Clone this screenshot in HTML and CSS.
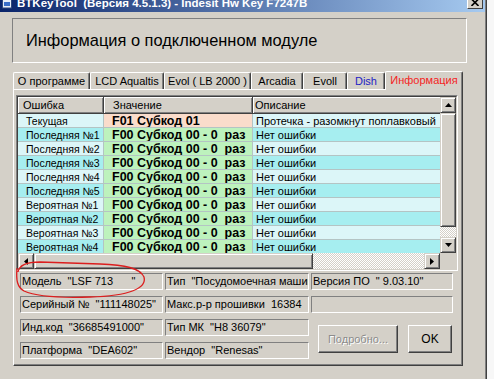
FILE: index.html
```html
<!DOCTYPE html>
<html lang="ru">
<head>
  <meta charset="UTF-8">
  <title>BTKeyTool</title>
  <link rel="stylesheet" href="styles.css">
</head>
<body>
  <div class="window">
    <!-- Title bar (its top is cut off) -->
    <div class="titlebar">
      <svg class="app-icon" width="12" height="10" viewBox="0 0 12 10">
        <rect x="1.5" y="-1" width="9" height="9" fill="#e8eef8" stroke="#30487c"/>
        <rect x="3" y="2" width="6" height="4" fill="#3a6ec8"/>
      </svg>
      <span class="title">BTKeyTool  (Версия 4.5.1.3) - Indesit Hw Key F7247B</span>
      <span class="close">
        <svg width="8" height="7" viewBox="0 0 8 7"><path d="M0.5 0 L7.5 7 M7.5 0 L0.5 7" stroke="#000" stroke-width="1.6"/></svg>
      </span>
    </div>

    <div class="client">
      <div class="caption-panel">Информация о подключенном модуле</div>

      <!-- Tabs -->
      <div class="tabs">
        <span class="tab t-about">О программе</span>
        <span class="tab t-lcd">LCD Aqualtis</span>
        <span class="tab t-evol">Evol ( LB 2000 )</span>
        <span class="tab t-arcadia">Arcadia</span>
        <span class="tab t-evoll">Evoll</span>
        <span class="tab t-dish">Dish</span>
        <span class="tab active">Информация</span>
      </div>

      <div class="page">
        <!-- Error grid -->
        <div class="grid">
          <div class="grid-inner">
            <div class="grid-top">
              <div class="table">
                <div class="head-row">
                  <div class="head h1">Ошибка</div>
                  <div class="head h2">Значение</div>
                  <div class="head h3">Описание</div>
                </div>
                <div class="rows">
                  <div class="err lt">Текущая</div><div class="val cur">F01 Субкод 01</div><div class="desc lt">Протечка - разомкнут поплавковый</div>
                  <div class="err dk">Последняя №1</div><div class="val">F00 Субкод 00 - 0  раз</div><div class="desc dk">Нет ошибки</div>
                  <div class="err lt">Последняя №2</div><div class="val">F00 Субкод 00 - 0  раз</div><div class="desc lt">Нет ошибки</div>
                  <div class="err dk">Последняя №3</div><div class="val">F00 Субкод 00 - 0  раз</div><div class="desc dk">Нет ошибки</div>
                  <div class="err lt">Последняя №4</div><div class="val">F00 Субкод 00 - 0  раз</div><div class="desc lt">Нет ошибки</div>
                  <div class="err dk">Последняя №5</div><div class="val">F00 Субкод 00 - 0  раз</div><div class="desc dk">Нет ошибки</div>
                  <div class="err lt">Вероятная №1</div><div class="val">F00 Субкод 00 - 0  раз</div><div class="desc lt">Нет ошибки</div>
                  <div class="err dk">Вероятная №2</div><div class="val">F00 Субкод 00 - 0  раз</div><div class="desc dk">Нет ошибки</div>
                  <div class="err lt">Вероятная №3</div><div class="val">F00 Субкод 00 - 0  раз</div><div class="desc lt">Нет ошибки</div>
                  <div class="err dk">Вероятная №4</div><div class="val">F00 Субкод 00 - 0  раз</div><div class="desc dk">Нет ошибки</div>
                </div>
              </div>
              <div class="vscroll">
                <div class="sb-btn"><svg width="7" height="4" viewBox="0 0 7 4"><path d="M3.5 0 L7 4 L0 4 Z"/></svg></div>
                <div class="sb-thumb v"></div>
                <div class="sb-track"></div>
                <div class="sb-btn"><svg width="7" height="4" viewBox="0 0 7 4"><path d="M0 0 L7 0 L3.5 4 Z"/></svg></div>
              </div>
            </div>
            <div class="hscroll-row">
              <div class="hscroll">
                <div class="sb-btn"><svg width="4" height="7" viewBox="0 0 4 7"><path d="M0 3.5 L4 0 L4 7 Z"/></svg></div>
                <div class="sb-thumb h"></div>
                <div class="sb-track"></div>
                <div class="sb-btn"><svg width="4" height="7" viewBox="0 0 4 7"><path d="M0 0 L4 3.5 L0 7 Z"/></svg></div>
              </div>
              <div class="corner"></div>
            </div>
          </div>
        </div>

        <!-- Module info fields -->
        <div class="fields">
          <div class="field">Модель  "LSF 713      "</div>
          <div class="field">Тип  "Посудомоечная машина"</div>
          <div class="field">Версия ПО  " 9.03.10"</div>
          <div class="field">Серийный №  "111148025"</div>
          <div class="field">Макс.р-р прошивки  16384</div>
          <div class="field"></div>
          <div class="field">Инд.код  "36685491000"</div>
          <div class="field">Тип МК  "H8 36079"</div>
          <div class="buttons">
            <span class="btn more">Подробно...</span>
            <span class="btn ok">OK</span>
          </div>
          <div class="field">Платформа  "DEA602"</div>
          <div class="field">Вендор  "Renesas"</div>
        </div>
      </div>
    </div>

    <!-- Hand-drawn red mark round the model field -->
    <svg class="mark" width="160" height="50" viewBox="0 0 160 50">
      <path d="M18 17 C19 11, 24 7, 40 7 L100 9 C125 10, 140 13, 144 22 C147 33, 130 41, 90 42 C60 43, 35 41, 24 36 C17 32, 16 25, 17 13" fill="none" stroke="#dc1e1e" stroke-width="1.3"/>
    </svg>
  </div>
</body>
</html>
```

FILE: styles.css
```css
body {
  margin: 0;
  background: #f7f7f7;
  font-family: "Liberation Sans", Arial, sans-serif;
  font-size: 11px;
  color: #000;
  overflow: hidden;
}
.window {
  position: relative;
  width: 485px;
  height: 379px;
  background: #d4d0c8;
  border-right: 1px solid #808080;
  box-shadow: 1px 0 0 #404040;
  overflow: hidden;
}

/* Title bar */
.titlebar {
  height: 12px;
  display: flex;
  align-items: flex-start;
  background: linear-gradient(to right, #0a246a, #a6caf0);
  color: #fff;
  overflow: hidden;
}
.app-icon {
  margin: 0 4px 0 1px;
  flex: none;
}
.title {
  font-weight: bold;
  font-size: 11.5px;
  line-height: 12px;
  margin-top: -3px;
  white-space: pre;
}
.close {
  margin: -5px 2px 0 auto;
  width: 16px;
  height: 14px;
  box-sizing: border-box;
  background: #d4d0c8;
  border: 1px solid;
  border-color: #fff #404040 #404040 #fff;
  display: flex;
  align-items: flex-end;
  justify-content: center;
  padding-bottom: 2px;
}

.client {
  padding: 6px 0 0 12px;
}
.caption-panel {
  width: 455px;
  height: 45px;
  box-sizing: border-box;
  border: 1px solid;
  border-color: #808080 #fff #fff #808080;
  display: flex;
  align-items: center;
  padding-left: 13px;
  font-size: 16.4px;
}

/* Tabs */
.tabs {
  display: flex;
  align-items: flex-end;
  height: 17px;
  margin: 9px 0 0 1px;
}
.tab {
  height: 17px;
  box-sizing: border-box;
  line-height: 16px;
  text-align: center;
  border-left: 1px solid #fff;
  border-top: 1px solid #fff;
  border-right: 1px solid #404040;
  box-shadow: inset -1px 0 #808080;
  border-radius: 2px 2px 0 0;
  white-space: pre;
}
.t-about { width: 77px; }
.t-lcd { width: 74px; }
.t-evol { width: 87px; }
.t-arcadia { width: 52px; }
.t-evoll { width: 44px; }
.t-dish {
  width: 38px;
  color: #1c1cc4;
}
.tab.active {
  width: 78px;
  color: #f42424;
  height: 19px;
  margin-bottom: -1px;
  padding-bottom: 1px;
  line-height: 17px;
  background: #d4d0c8;
  position: relative;
}

.page {
  width: 450px;
  height: 277px;
  box-sizing: border-box;
  margin-left: 1px;
  border: 1px solid;
  border-color: #fff #404040 #404040 #fff;
  box-shadow: inset -1px -1px #808080;
  padding: 5px 0 0 2px;
}

/* Grid */
.grid {
  width: 442px;
  box-sizing: border-box;
  border: 1px solid;
  border-color: #808080 #fff #fff #808080;
}
.grid-inner {
  border: 1px solid;
  border-color: #404040 #d4d0c8 #d4d0c8 #404040;
}
.grid-top {
  display: flex;
}
.table {
  width: 422px;
  height: 156px;
  overflow: hidden;
}
.head-row,
.rows {
  display: grid;
  grid-template-columns: 85px 148px 188px;
  column-gap: 1px;
}
.head-row {
  height: 16px;
  padding-bottom: 1px;
  background: #404040;
}
.head {
  background: #d4d0c8;
  box-shadow: inset 1px 1px #fff, inset -1px -1px #808080;
  line-height: 16px;
  white-space: nowrap;
}
.h1 { padding-left: 5px; }
.h2 { padding-left: 9px; }
.h3 { padding-left: 2px; }
.rows {
  grid-auto-rows: 13px;
  row-gap: 1px;
  background: #b4c4c4;
}
.rows > div {
  padding-top: 2px;
  line-height: 11px;
  white-space: pre;
  overflow: hidden;
  box-sizing: border-box;
}
.err {
  padding-left: 8px;
  font-size: 10.5px;
}
.desc { padding-left: 3px; }
.lt { background: #dcf6f8; }
.dk { background: #a6eef0; }
.val {
  padding-left: 8px;
  font-weight: bold;
  font-size: 12.5px;
  background: #bdf2bd;
}
.val.cur {
  background: #fadccb;
}

/* Scroll bars */
.vscroll {
  width: 16px;
  height: 156px;
  display: flex;
  flex-direction: column;
}
.sb-btn {
  width: 16px;
  height: 16px;
  flex: none;
  box-sizing: border-box;
  background: #d4d0c8;
  border: 1px solid;
  border-color: #d4d0c8 #404040 #404040 #d4d0c8;
  box-shadow: inset 1px 1px #fff, inset -1px -1px #808080;
  display: flex;
  align-items: center;
  justify-content: center;
}
.sb-thumb {
  flex: none;
  box-sizing: border-box;
  background: #d4d0c8;
  border: 1px solid;
  border-color: #d4d0c8 #404040 #404040 #d4d0c8;
  box-shadow: inset 1px 1px #fff, inset -1px -1px #808080;
}
.sb-thumb.v {
  height: 114px;
}
.sb-thumb.h {
  width: 279px;
}
.sb-track {
  flex: 1;
  background: repeating-conic-gradient(#d4d0c8 0 25%, #fff 0 50%) 0 0 / 2px 2px;
}
.hscroll-row {
  display: flex;
  height: 16px;
}
.hscroll {
  width: 422px;
  display: flex;
}
.corner {
  flex: 1;
  background: #d4d0c8;
}

/* Info fields */
.fields {
  display: grid;
  grid-template-columns: 143px 144px 142px;
  grid-template-rows: repeat(4, 17px);
  column-gap: 2px;
  row-gap: 6px;
  margin: 2px 0 0 4px;
}
.field {
  box-sizing: border-box;
  border: 1px solid;
  border-color: #808080 #fff #fff #808080;
  padding-left: 1px;
  line-height: 15px;
  white-space: pre;
  overflow: hidden;
}
.buttons {
  grid-column: 3;
  grid-row: 3 / 5;
  display: flex;
  align-items: center;
  gap: 10px;
  padding-left: 7px;
}
.btn {
  height: 28px;
  box-sizing: border-box;
  background: #d4d0c8;
  border: 1px solid;
  border-color: #fff #404040 #404040 #fff;
  box-shadow: inset -1px -1px #808080;
  display: flex;
  align-items: center;
  justify-content: center;
}
.btn.more {
  width: 80px;
  color: #8c8c8c;
  text-shadow: 1px 1px #fff;
}
.btn.ok {
  width: 44px;
  font-size: 12px;
}

.mark {
  position: absolute;
  left: 0;
  top: 255px;
}
```
